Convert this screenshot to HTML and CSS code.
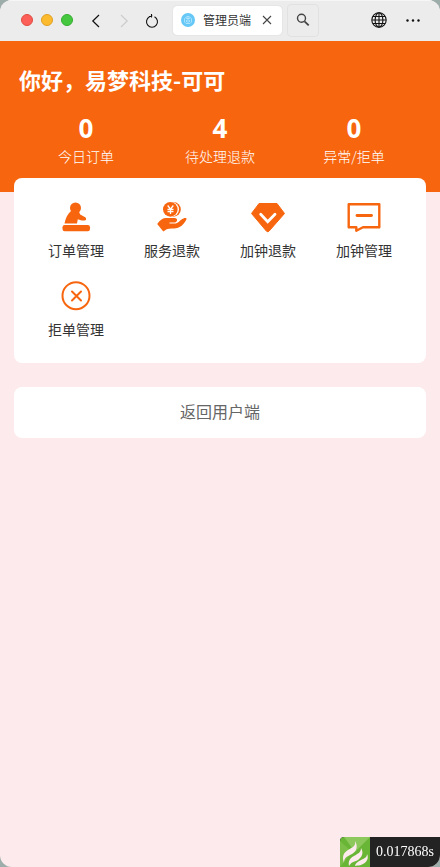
FILE: index.html
```html
<!DOCTYPE html>
<html lang="zh-CN">
<head>
<meta charset="utf-8">
<meta name="viewport" content="width=device-width, initial-scale=1">
<title>管理员端</title>
<link rel="stylesheet" href="styles.css">
</head>
<body>
<div class="window">
  <header class="toolbar">
    <div class="lights">
      <button class="light red" aria-label="关闭窗口"></button>
      <button class="light yellow" aria-label="最小化"></button>
      <button class="light green" aria-label="全屏"></button>
    </div>
    <nav class="nav" aria-label="导航">
      <button class="tool" aria-label="后退"><svg width="16" height="16" viewBox="0 0 16 16"><path d="M11 3 4.800 9l6.200 6" fill="none" stroke="#111" stroke-width="1.200"/></svg></button>
      <button class="tool" aria-label="前进"><svg width="16" height="16" viewBox="0 0 16 16"><path d="M5 3 11.200 9 5 15" fill="none" stroke="#ccc" stroke-width="1.200"/></svg></button>
      <button class="tool" aria-label="刷新"><svg width="16" height="16" viewBox="0 0 16 16"><path d="M5.500 4.800A5.500 5.500 0 1 0 10.500 4.800M4.800 4.500 8.300 3.800M7.500 2v3.500" fill="none" stroke="#111" stroke-width="1.100"/></svg></button>
    </nav>
    <div class="tab">
      <svg width="14" height="14" viewBox="0 0 14 14"><circle cx="7" cy="7" r="7" fill="#66c8f6"/><path d="M3.500 9V5.800L5 4.200l2-1 2 1 1.500 1.600V9L9 10.500H5zM5 5.500h4M5.500 7v2M8.500 7v2M7 3.500v7" fill="none" stroke="#c4ecff" stroke-width=".7"/></svg>
      <span class="tab-title">管理员端</span>
      <button class="tool close" aria-label="关闭标签页"><svg width="10" height="10" viewBox="0 0 10 10"><path d="M1 1l8 8M9 1 1 9" stroke="#444" stroke-width="1.100"/></svg></button>
    </div>
    <button class="search" aria-label="搜索"><svg width="14" height="14" viewBox="0 0 14 14"><circle cx="5.500" cy="5.300" r="4" fill="none" stroke="#444" stroke-width="1.400"/><path d="M8.500 8.300l4.200 4" stroke="#444" stroke-width="1.800"/></svg></button>
    <div class="actions">
      <button class="tool" aria-label="语言"><svg width="16" height="16" viewBox="0 0 16 16"><g fill="none" stroke="#111" stroke-width="1.100"><circle cx="8" cy="8" r="7.200"/><ellipse cx="8" cy="8" rx="3.900" ry="7.200"/><path d="M8 1v14M1 8h14M2 4.500h12M2 11.500h12"/></g></svg></button>
      <button class="tool" aria-label="更多"><svg width="16" height="16" viewBox="0 0 16 16"><g fill="#111"><circle cx="2.500" cy="8.500" r="1.200"/><circle cx="8" cy="8.500" r="1.200"/><circle cx="13.500" cy="8.500" r="1.200"/></g></svg></button>
    </div>
  </header>
  <main class="page">
    <section class="hero">
      <h1>你好，易梦科技-可可</h1>
      <div class="stats">
        <div class="stat"><strong>0</strong><span>今日订单</span></div>
        <div class="stat"><strong>4</strong><span>待处理退款</span></div>
        <div class="stat"><strong>0</strong><span>异常/拒单</span></div>
      </div>
    </section>
    <nav class="card menu" aria-label="管理菜单">
      <a class="item" href="#orders">
        <svg width="36" height="36" viewBox="0 0 36 36" fill="#f7660f"><circle cx="17.500" cy="9" r="5.500"/><path d="M13.500 11.500C9.500 15 7.500 19 6.500 24.500h12.500l.8-4.200c2.500 1 4 1.300 7 1.200 1.800-.2 1.700-2.400.4-3.300l-5-2.700-2-4.500z"/><rect x="4.500" y="26" width="27.500" height="6.300" rx="2.200"/></svg>
        <span>订单管理</span>
      </a>
      <a class="item" href="#refunds">
        <svg width="36" height="36" viewBox="0 0 36 36"><circle cx="19.500" cy="10.400" r="7.300" fill="#f7660f"/><circle cx="17.700" cy="10.400" r="7.300" fill="#fff"/><circle cx="16.300" cy="10.400" r="7.300" fill="#f7660f"/><path d="M13.700 6.500l2.800 3.600 2.800-3.600M13.500 10.500h6M13.500 12.700h6M16.500 10v5" fill="none" stroke="#fff" stroke-width="1.300"/><path d="M3.200 25c3-4.300 6-6 9-5.900h8.500c3.200.1 3.200 4.100 0 4.400h-5.200v.9h6c2.700-.2 4.700-3.700 8-5 1.200-.5 3-.4 3.200.4-2 4.400-5.700 8.500-9.500 9.200-4 .9-7.700.1-10.500 1.300L9.300 32.500z" fill="#f7660f"/></svg>
        <span>服务退款</span>
      </a>
      <a class="item" href="#extra-refunds">
        <svg width="36" height="36" viewBox="0 0 36 36"><path d="M9 4.500h18l7.500 10L19 32.200q-1.300 1-2.500 0L1.500 14.500z" fill="#f7660f" stroke="#f7660f" stroke-linejoin="round"/><path d="M10.700 15.300l7 7.500 7.300-7.500" fill="none" stroke="#fff" stroke-width="2.800" stroke-linecap="round"/></svg>
        <span>加钟退款</span>
      </a>
      <a class="item" href="#extra">
        <svg width="36" height="36" viewBox="0 0 36 36" fill="none" stroke="#f7660f" stroke-linejoin="round"><path d="M2.700 5.300h30.600v23H17l-6.700 3.500v-3.500H2.700z" stroke-width="2.400"/><path d="M11 16.500h14.500" stroke-width="2.800" stroke-linecap="round"/></svg>
        <span>加钟管理</span>
      </a>
      <a class="item" href="#rejected">
        <svg width="36" height="36" viewBox="0 0 36 36" fill="none" stroke="#f7660f"><circle cx="18" cy="17.700" r="13.500" stroke-width="2"/><path d="M14 13.500l9 9M23 13.500l-9 9" stroke-width="2" stroke-linecap="round"/></svg>
        <span>拒单管理</span>
      </a>
    </nav>
    <button class="card back">返回用户端</button>
  </main>
  <aside class="trace">
    <svg width="30" height="30" viewBox="0 0 30 30"><path d="M0 4q0-4 4-4h26v30H0z" fill="#69b536"/><path d="M4 0h26L15 15z" fill="#8cc85c"/><path d="M0 4v26l12-15z" fill="#7bbf48"/><path d="M15 4c1 5-2 6-7 9-5 3-6 7-4 13 0-6 4-7 8-9 5-3 6-8 3-13z" fill="#fdeaec"/><path d="M21 11c0 4-2 5-7 8-4 2-6 5-5 10 2-4 5-4 9-6 4-3 6-7 3-12z" fill="#fdeaec"/><path d="M27 17c0 3-2 4-6 6-4 2-6 4-6 6 3-1 5 0 8-2 4-2 6-6 4-10z" fill="#fdeaec"/></svg>
    <span>0.017868s</span>
  </aside>
</div>
</body>
</html>
```
FILE: styles.css
```css
* {
  box-sizing: border-box;
}

body {
  margin: 0;
  background: #9dada9;
  font-family: "Noto Sans CJK SC", sans-serif;
  color: #333;
}

button {
  padding: 0;
  border: 0;
  background: none;
  font: inherit;
  color: inherit;
}

svg {
  display: block;
}

.window {
  display: flex;
  flex-direction: column;
  min-height: 100vh;
  overflow: hidden;
  border-radius: 12px;
  background: #fdeaec;
}

.toolbar {
  display: flex;
  align-items: center;
  height: 41px;
  padding: 0 19px 2px 21px;
  border-top: 1px solid #f6f6f6;
  background: #ececec;
}

.lights {
  display: flex;
  gap: 8px;
}

.light {
  width: 12px;
  height: 12px;
  border: 1px solid;
  border-radius: 50%;
}

.red {
  background: #fb5f57;
  border-color: #e14c43;
}

.yellow {
  background: #fcbb2f;
  border-color: #dfa023;
}

.green {
  background: #45c83f;
  border-color: #34ad31;
}

.nav {
  display: flex;
  gap: 12px;
  margin-left: 15px;
}

.tab {
  display: flex;
  align-items: center;
  width: 109px;
  height: 29px;
  margin-left: 13px;
  padding: 0 10px 0 8px;
  border-radius: 4px;
  background: #fff;
  box-shadow: 0 0 1px #bbb;
}

.tab-title {
  margin-left: 8px;
  font-size: 12px;
  line-height: 16px;
  white-space: nowrap;
}

.close {
  margin-left: auto;
}

.search {
  display: grid;
  place-items: center;
  width: 32px;
  height: 33px;
  margin-left: 5px;
  border: 1px solid #e1e1e1;
  border-radius: 4px;
}

.actions {
  display: flex;
  gap: 18px;
  margin-left: auto;
}

.page {
  flex: 1;
}

.hero {
  height: 151px;
  padding: 22px 19px 0;
  background: #f7660f;
  color: #fff;
}

h1 {
  margin: 0;
  font-size: 22px;
  font-weight: 700;
  line-height: 32px;
}

.stats {
  display: grid;
  grid-template-columns: repeat(3, 1fr);
  margin-top: 17px;
}

.stat {
  display: flex;
  flex-direction: column;
  align-items: center;
}

.stat strong {
  font-family: "Noto Sans", sans-serif;
  font-size: 26px;
  line-height: 32px;
}

.stat span {
  font-size: 14px;
  font-weight: 300;
  line-height: 24px;
}

.card {
  border-radius: 8px;
  background: #fff;
}

.menu {
  display: grid;
  grid-template-columns: repeat(4, 1fr);
  row-gap: 18px;
  margin: -14px 14px 0;
  padding: 21px 14px 24px;
}

.item {
  display: flex;
  flex-direction: column;
  align-items: center;
  gap: 5px;
  font-size: 14px;
  line-height: 20px;
  color: #333;
  text-decoration: none;
}

.back {
  display: block;
  width: calc(100% - 28px);
  height: 51px;
  margin: 24px 14px;
  padding-bottom: 3px;
  font-size: 16px;
  color: #666;
}

.trace {
  position: fixed;
  right: 0;
  bottom: 0;
  display: flex;
  height: 30px;
  overflow: hidden;
  border-radius: 4px 0 12px 0;
  background: #232323;
}

.trace span {
  padding: 0 6px;
  font-family: "Liberation Serif", serif;
  font-size: 14px;
  line-height: 30px;
  color: #fff;
}
```
